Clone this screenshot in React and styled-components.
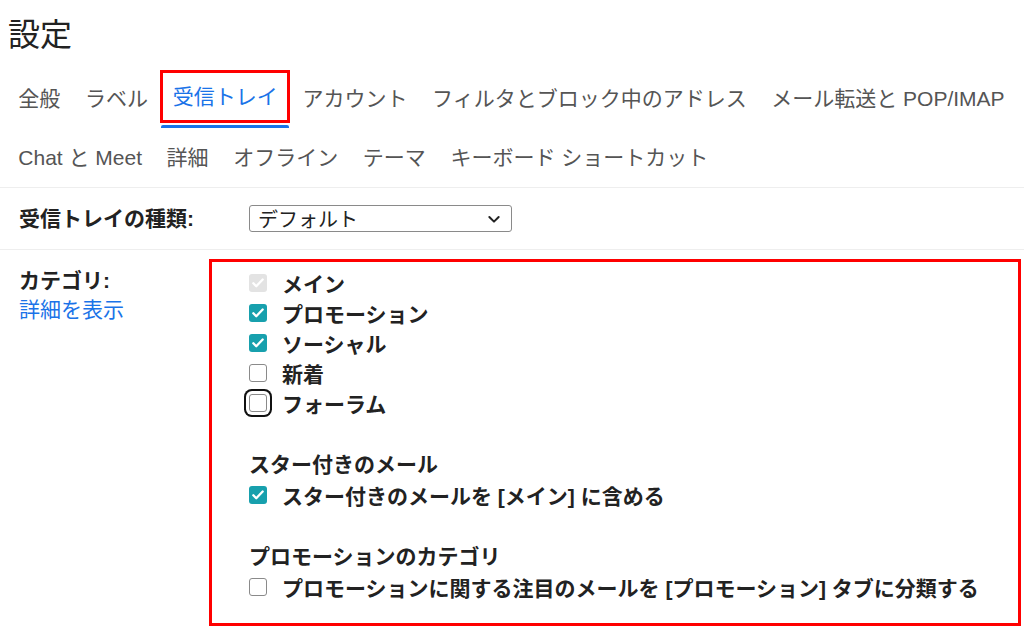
import React from 'react'
import styled, { createGlobalStyle } from 'styled-components'

const GlobalStyle = createGlobalStyle`
  html, body {
    margin: 0;
    padding: 0;
    background: #fff;
  }
  body {
    font-family: "Liberation Sans", "Noto Sans CJK JP", sans-serif;
    color: #222;
  }
`

const Page = styled.div`
  width: 1024px;
  height: 627px;
  overflow: hidden;
`

const Title = styled.h1`
  margin: 0;
  height: 70px;
  box-sizing: border-box;
  padding: 0 8px 6px;
  display: flex;
  align-items: center;
  font-size: 32px;
  font-weight: 400;
  color: #222;
`

const TabRow = styled.div`
  display: flex;
  align-items: stretch;
  padding-left: 6px;
  height: ${p => p.$h}px;
  border-bottom: ${p => (p.$last ? '1px solid #eee' : 'none')};
`

const Tab = styled.div`
  position: relative;
  display: flex;
  align-items: center;
  font-size: 21px;
  line-height: 1;
  white-space: nowrap;
  box-sizing: border-box;
  color: ${p => (p.$active ? '#1a73e8' : '#555')};
  height: ${p => (p.$active ? '53px' : 'auto')};
  border: ${p => (p.$active ? '3px solid #f00' : 'none')};
  padding: ${p => (p.$active ? '0 9.5px' : '0 12.3px')};

  &::after {
    content: '';
    display: ${p => (p.$active ? 'block' : 'none')};
    position: absolute;
    left: -2px;
    right: -2px;
    bottom: -8px;
    height: 3px;
    background: #1a73e8;
    border-radius: 2px 2px 0 0;
  }
`

const SettingRow = styled.div`
  display: grid;
  grid-template-columns: 209px 1fr;
  border-bottom: ${p => (p.$divider ? '1px solid #eee' : 'none')};
  padding-top: ${p => p.$top || 0}px;
`

const Label = styled.div`
  padding-left: 19px;
  padding-top: ${p => p.$top || 0}px;
  font-size: 21px;
  font-weight: 700;
  color: #222;
  line-height: 29px;
  align-self: ${p => (p.$center ? 'center' : 'auto')};
`

const TypeCell = styled.div`
  display: flex;
  align-items: center;
  height: 61px;
  padding-left: 40px;
`

const Select = styled.div`
  width: 263px;
  height: 27px;
  box-sizing: border-box;
  border: 1px solid #8a8a8a;
  border-radius: 3px;
  display: flex;
  align-items: center;
  justify-content: space-between;
  padding: 0 9px 0 8px;
  font-size: 20px;
  color: #222;
`

const LinkText = styled.div`
  font-size: 21px;
  font-weight: 400;
  color: #1a73e8;
`

const Categories = styled.div`
  border: 3px solid #f00;
  margin-right: 3px;
  padding: 6px 0 21px 37px;
  display: flex;
  flex-direction: column;
`

const Option = styled.label`
  display: flex;
  align-items: center;
  gap: 15px;
  height: 30px;
  font-size: 21px;
  font-weight: 700;
  color: #222;
  white-space: nowrap;
`

const Heading = styled.div`
  display: flex;
  align-items: center;
  height: 30px;
  margin-top: 30px;
  margin-bottom: 2px;
  font-size: 21px;
  font-weight: 700;
  color: #222;
`

const Box = styled.span`
  flex: none;
  width: 18px;
  height: 18px;
  box-sizing: border-box;
  border-radius: 3px;
  display: flex;
  align-items: center;
  justify-content: center;
  background: ${p => (p.$state === 'on' ? '#17a0ad' : p.$state === 'disabled' ? '#e3e3e3' : '#fff')};
  border: ${p => (p.$state === 'off' ? '1.5px solid #8a8a8a' : 'none')};
  box-shadow: ${p => (p.$focus ? '0 0 0 3px #fff, 0 0 0 5px #111' : 'none')};
`

const Check = () => (
  <svg width="14" height="14" viewBox="0 0 24 24" fill="none" stroke="#fff" strokeWidth="4" strokeLinecap="round" strokeLinejoin="round">
    <path d="M4 12.5l5 5L20 6" />
  </svg>
)

const Chevron = () => (
  <svg width="16" height="16" viewBox="0 0 24 24" fill="none" stroke="#222" strokeWidth="3" strokeLinecap="round" strokeLinejoin="round">
    <path d="M5 9l7 7 7-7" />
  </svg>
)

const Checkbox = ({ state = 'off', focus, children }) => (
  <Option>
    <Box $state={state} $focus={focus}>
      {state !== 'off' && <Check />}
    </Box>
    {children}
  </Option>
)

const row1 = ['全般', 'ラベル', '受信トレイ', 'アカウント', 'フィルタとブロック中のアドレス', 'メール転送と POP/IMAP']
const row2 = ['Chat と Meet', '詳細', 'オフライン', 'テーマ', 'キーボード ショートカット']

export default function App() {
  return (
    <Page>
      <GlobalStyle />
      <Title>設定</Title>
      <TabRow $h={57}>
        {row1.map(t => (
          <Tab key={t} $active={t === '受信トレイ'}>{t}</Tab>
        ))}
      </TabRow>
      <TabRow $h={60} $last>
        {row2.map(t => (
          <Tab key={t}>{t}</Tab>
        ))}
      </TabRow>

      <SettingRow $divider>
        <Label $center>受信トレイの種類:</Label>
        <TypeCell>
          <Select>
            <span>デフォルト</span>
            <Chevron />
          </Select>
        </TypeCell>
      </SettingRow>

      <SettingRow $top={9}>
        <div>
          <Label $top={7}>カテゴリ:</Label>
          <Label>
            <LinkText>詳細を表示</LinkText>
          </Label>
        </div>
        <Categories>
          <Checkbox state="disabled">メイン</Checkbox>
          <Checkbox state="on">プロモーション</Checkbox>
          <Checkbox state="on">ソーシャル</Checkbox>
          <Checkbox>新着</Checkbox>
          <Checkbox focus>フォーラム</Checkbox>
          <Heading>スター付きのメール</Heading>
          <Checkbox state="on">スター付きのメールを [メイン] に含める</Checkbox>
          <Heading>プロモーションのカテゴリ</Heading>
          <Checkbox>プロモーションに関する注目のメールを [プロモーション] タブに分類する</Checkbox>
        </Categories>
      </SettingRow>
    </Page>
  )
}
